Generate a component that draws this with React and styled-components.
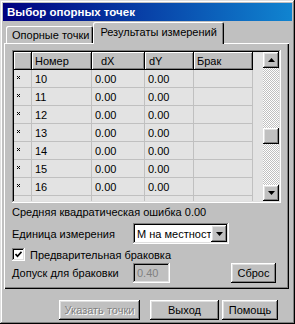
import React from 'react';
import styled, { createGlobalStyle, css } from 'styled-components';

const GlobalStyle = createGlobalStyle`
  html, body {
    margin: 0;
    padding: 0;
    background: #c0c0c0;
  }
  body {
    font-family: 'Liberation Sans', Arial, sans-serif;
    font-size: 11px;
    color: #000;
  }
  * {
    box-sizing: border-box;
  }
`;

const raised = css`
  background: #c0c0c0;
  box-shadow: inset -1px -1px #000, inset 1px 1px #fff, inset -2px -2px #808080,
    inset 2px 2px #dfdfdf;
`;

const sunken = css`
  box-shadow: inset -1px -1px #fff, inset 1px 1px #808080, inset -2px -2px #dfdfdf,
    inset 2px 2px #000;
`;

const Window = styled.div`
  width: 295px;
  height: 324px;
  padding: 3px;
  display: flex;
  flex-direction: column;
  ${raised};
  box-shadow: inset -1px -1px #000, inset 1px 1px #dfdfdf, inset -2px -2px #808080,
    inset 2px 2px #fff;
`;

const TitleBar = styled.div`
  height: 18px;
  display: flex;
  align-items: center;
  padding-left: 4px;
  background: linear-gradient(90deg, #000080, #1084d0);
  color: #fff;
  font-weight: bold;
  font-size: 11.5px;
`;

const TabRow = styled.div`
  height: 22px;
  display: flex;
  align-items: flex-end;
  padding-left: 3px;
`;

const Tab = styled.div`
  position: relative;
  height: ${(p) => (p.active ? '22px' : '17px')};
  margin-bottom: ${(p) => (p.active ? '-1px' : '0')};
  padding: ${(p) => (p.active ? '0 7px 3px 7px' : '0 4px 0 6px')};
  display: flex;
  align-items: center;
  background: #c0c0c0;
  border-radius: 2px 2px 0 0;
  box-shadow: inset 1px 1px #fff, inset -1px 0 #000, inset -2px 0 #808080;
  z-index: ${(p) => (p.active ? 2 : 1)};
  white-space: nowrap;
`;

const Panel = styled.div`
  margin-left: 1px;
  width: 285px;
  height: 246px;
  padding: 7px 0 0 8px;
  display: flex;
  flex-direction: column;
  box-shadow: inset 1px 1px #fff, inset -1px -1px #000, inset -2px -2px #808080;
`;

const Grid = styled.div`
  width: 269px;
  height: 153px;
  padding: 2px;
  display: flex;
  background: #c0c0c0;
  ${sunken};
`;

const Table = styled.div`
  flex: 1;
  overflow: hidden;
  background: #e3e3e3;
`;

const columns = '18px 60px 53px 49px 59px';

const HeadRow = styled.div`
  display: grid;
  grid-template-columns: ${columns};
  height: 18px;
`;

const HeadCell = styled.div`
  background: #c0c0c0;
  border-right: 1px solid #000;
  border-bottom: 1px solid #000;
  box-shadow: inset 1px 1px #fff, inset -1px -1px #808080;
  padding-left: ${(p) => p.pad || 3}px;
  display: flex;
  align-items: center;
  white-space: nowrap;
`;

const Row = styled.div`
  display: grid;
  grid-template-columns: ${columns};
  height: 18px;
`;

const Cell = styled.div`
  border-right: 1px solid #c0c0c0;
  border-bottom: 1px solid #c0c0c0;
  padding-left: 3px;
  display: flex;
  align-items: center;
  white-space: nowrap;
`;

const MarkCell = styled(Cell)`
  align-items: flex-start;
  padding: 6px 0 0 3px;
`;

const ScrollBar = styled.div`
  width: 16px;
  display: flex;
  flex-direction: column;
`;

const ScrollButton = styled.div`
  width: 16px;
  height: 16px;
  display: flex;
  align-items: center;
  justify-content: center;
  ${raised};
`;

const Track = styled.div`
  height: ${(p) => (p.fill ? 'auto' : `${p.h}px`)};
  flex: ${(p) => (p.fill ? 1 : 'none')};
  background: repeating-conic-gradient(#c0c0c0 0 25%, #fff 0 50%) 0 0 / 2px 2px;
`;

const Line = styled.div`
  height: 13px;
  line-height: 13px;
  margin-top: ${(p) => p.mt || 0}px;
  white-space: nowrap;
`;

const FieldRow = styled.div`
  display: flex;
  align-items: center;
  height: ${(p) => p.h}px;
  margin-top: ${(p) => p.mt || 0}px;
`;

const Label = styled.div`
  width: 121px;
  white-space: nowrap;
`;

const Combo = styled.div`
  width: 96px;
  height: 21px;
  padding: 2px 2px 2px 4px;
  display: flex;
  align-items: center;
  background: #fff;
  ${sunken};
`;

const ComboText = styled.div`
  flex: 1;
  overflow: hidden;
  white-space: nowrap;
`;

const DropButton = styled(ScrollButton)`
  height: 17px;
`;

const CheckRow = styled.label`
  display: flex;
  align-items: center;
  gap: 5px;
  height: 13px;
  margin-top: 4px;
`;

const CheckBox = styled.span`
  width: 13px;
  height: 13px;
  display: flex;
  align-items: center;
  justify-content: center;
  background: #fff;
  ${sunken};
`;

const Input = styled.div`
  width: 37px;
  height: 20px;
  padding: 0 4px;
  display: flex;
  align-items: center;
  background: #c0c0c0;
  color: #808080;
  ${sunken};
`;

const Button = styled.div`
  width: ${(p) => p.w}px;
  height: 20px;
  margin-left: ${(p) => p.ml || 0}px;
  display: flex;
  align-items: center;
  justify-content: center;
  white-space: nowrap;
  ${raised};
  ${(p) =>
    p.disabled &&
    css`
      color: #808080;
      text-shadow: 1px 1px #fff;
    `}
`;

const ButtonRow = styled.div`
  display: flex;
  margin-top: 11px;
  padding-left: 56px;
`;

const Arrow = ({ up }) => (
  <svg width="7" height="4" viewBox="0 0 7 4">
    <polygon points={up ? '3.5,0 7,4 0,4' : '0,0 7,0 3.5,4'} fill="#000" />
  </svg>
);

const Mark = () => (
  <svg width="3" height="3" viewBox="0 0 3 3">
    <rect x="0" y="0" width="1" height="1" fill="#000" />
    <rect x="2" y="0" width="1" height="1" fill="#000" />
    <rect x="1" y="1" width="1" height="1" fill="#000" />
    <rect x="0" y="2" width="1" height="1" fill="#000" />
    <rect x="2" y="2" width="1" height="1" fill="#000" />
  </svg>
);

const rows = [10, 11, 12, 13, 14, 15, 16, 17];

export default function App() {
  return (
    <>
      <GlobalStyle />
      <Window>
        <TitleBar>Выбор опорных точек</TitleBar>
        <TabRow>
          <Tab>Опорные точки</Tab>
          <Tab active>Результаты измерений</Tab>
        </TabRow>
        <Panel>
          <Grid>
            <Table>
              <HeadRow>
                <HeadCell />
                <HeadCell>Номер</HeadCell>
                <HeadCell pad={9}>dX</HeadCell>
                <HeadCell pad={4}>dY</HeadCell>
                <HeadCell>Брак</HeadCell>
              </HeadRow>
              {rows.map((n) => (
                <Row key={n}>
                  <MarkCell>
                    <Mark />
                  </MarkCell>
                  <Cell>{n}</Cell>
                  <Cell>0.00</Cell>
                  <Cell>0.00</Cell>
                  <Cell />
                </Row>
              ))}
            </Table>
            <ScrollBar>
              <ScrollButton>
                <Arrow up />
              </ScrollButton>
              <Track h={60} />
              <ScrollButton />
              <Track fill />
              <ScrollButton>
                <Arrow />
              </ScrollButton>
            </ScrollBar>
          </Grid>
          <Line mt={3}>Средняя квадратическая ошибка 0.00</Line>
          <FieldRow h={21} mt={4}>
            <Label>Единица измерения</Label>
            <Combo>
              <ComboText>М на местност</ComboText>
              <DropButton>
                <Arrow />
              </DropButton>
            </Combo>
          </FieldRow>
          <CheckRow>
            <CheckBox>
              <svg width="7" height="7" viewBox="0 0 7 7">
                <path d="M0.5 3 L2.5 5.2 L6.5 0.8" stroke="#000" strokeWidth="1.7" fill="none" />
              </svg>
            </CheckBox>
            Предварительная браковка
          </CheckRow>
          <FieldRow h={21} mt={1}>
            <Label>Допуск для браковки</Label>
            <Input>0.40</Input>
            <Button w={45} ml={61}>
              Сброс
            </Button>
          </FieldRow>
        </Panel>
        <ButtonRow>
          <Button w={81} disabled>
            Указать точки
          </Button>
          <Button w={69} ml={10}>
            Выход
          </Button>
          <Button w={56} ml={3}>
            Помощь
          </Button>
        </ButtonRow>
      </Window>
    </>
  );
}
